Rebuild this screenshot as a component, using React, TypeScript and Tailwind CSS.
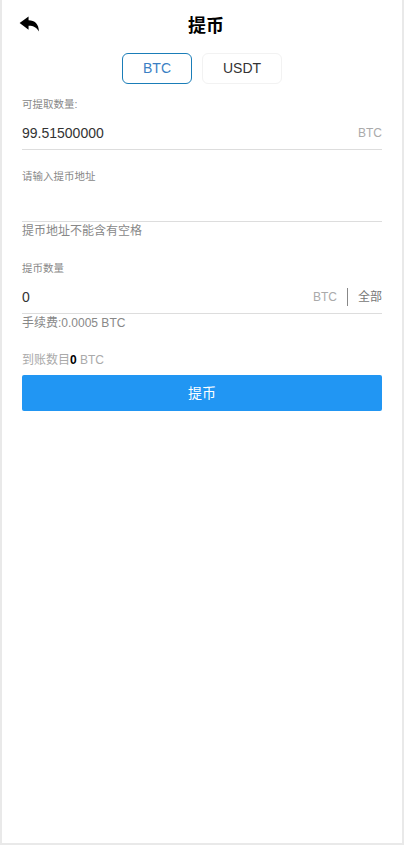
const App = () => {
  return (
    <div className="w-[405px] h-[846px] bg-white overflow-hidden font-['Liberation_Sans','Noto_Sans_CJK_SC',sans-serif]">
      <div className="w-[404px] h-[845px] border-x-2 border-b-2 border-[#e9e9e9] px-5 relative">
        <div className="h-[53px] flex items-center justify-center relative">
          <svg className="absolute left-[-3px] top-[16px] w-[21px] h-[16px]" viewBox="0 0 22 17">
            <path d="M0.5 7.5 L10 0.5 V4.5 C16.5 4.5 21 8.5 21 16.5 C18.8 12.5 15.5 10.4 10 10.4 V14.5 Z" fill="#000" />
          </svg>
          <h1 className="text-[18px] font-bold text-black leading-none mt-[-2px] ml-[8px]">提币</h1>
        </div>

        <div className="flex justify-center gap-[10px] ml-[-1px]">
          <button className="w-[70px] h-[31px] pl-[1px] border border-[#1a7db8] rounded-[6px] text-[14px] text-[#3b7fc4]">BTC</button>
          <button className="w-[80px] h-[31px] pl-[1px] border border-[#f2f2f2] rounded-[6px] text-[14px] text-[#333]">USDT</button>
        </div>

        <div className="mt-[12px] text-[10.5px] leading-[16px] text-[#888]">可提取数量:</div>
        <div className="h-[38px] flex items-center justify-between border-b border-[#ddd] pt-[5px]">
          <span className="text-[14px] text-[#333]">99.51500000</span>
          <span className="text-[12px] text-[#aaa]">BTC</span>
        </div>

        <div className="mt-[18px] text-[10.5px] leading-[16px] text-[#888]">请输入提币地址</div>
        <div className="h-[38px] border-b border-[#ddd]"></div>
        <div className="text-[12px] leading-[19px] text-[#888]">提币地址不能含有空格</div>

        <div className="mt-[19px] text-[10.5px] leading-[16px] text-[#888]">提币数量</div>
        <div className="h-[38px] flex items-center justify-between border-b border-[#ddd] pt-[5px]">
          <span className="text-[14px] text-[#333]">0</span>
          <div className="flex items-center">
            <span className="text-[12px] text-[#aaa]">BTC</span>
            <span className="w-px h-[18px] bg-[#888] mx-[10px]"></span>
            <span className="text-[12px] text-[#777]">全部</span>
          </div>
        </div>
        <div className="text-[12px] leading-[19px] text-[#888]">手续费:0.0005 BTC</div>

        <div className="mt-[19px] text-[12px] leading-[17px] text-[#aaa]">
          到账数目<b className="text-black">0</b> BTC
        </div>
        <button className="mt-[6px] w-full h-[36px] bg-[#2196f3] rounded-[2px] text-[14px] text-white">提币</button>
      </div>
    </div>
  );
};

export default App;
